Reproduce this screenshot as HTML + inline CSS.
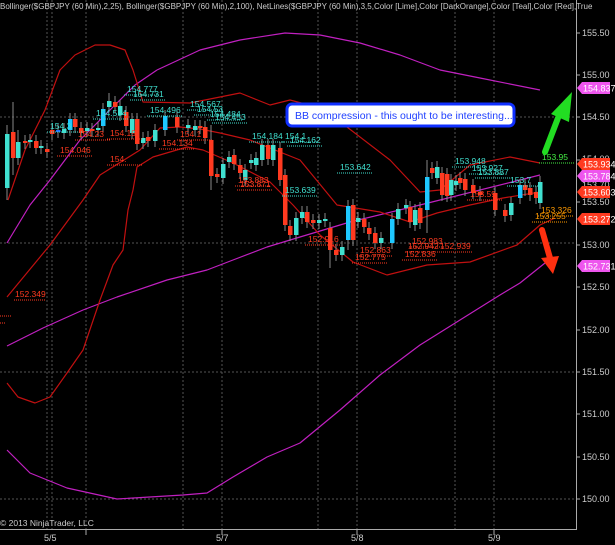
<!DOCTYPE html>
<html><head><meta charset="utf-8"><style>
html,body{margin:0;padding:0;background:#000;width:615px;height:545px;overflow:hidden}
svg{display:block}
text{font-family:"Liberation Sans",sans-serif}
</style></head><body>
<svg id="s" width="615" height="545" viewBox="0 0 615 545" xmlns="http://www.w3.org/2000/svg">
<rect width="615" height="545" fill="#000"/>
<g stroke="#555" stroke-dasharray="2,2" stroke-width="1">
<line x1="47" y1="0" x2="47" y2="529"/>
<line x1="52" y1="0" x2="52" y2="529"/><line x1="86" y1="0" x2="86" y2="529"/>
<line x1="183" y1="0" x2="183" y2="529"/><line x1="222" y1="0" x2="222" y2="529"/>
<line x1="318" y1="0" x2="318" y2="529"/><line x1="357" y1="0" x2="357" y2="529"/>
<line x1="455" y1="0" x2="455" y2="529"/><line x1="494" y1="0" x2="494" y2="529"/>
<line x1="0" y1="117" x2="576" y2="117"/><line x1="0" y1="243" x2="576" y2="243"/>
<line x1="0" y1="372" x2="576" y2="372"/><line x1="0" y1="499" x2="576" y2="499"/>
</g>
<line x1="576.5" y1="0" x2="576.5" y2="529" stroke="#aaa"/>
<line x1="0" y1="529.5" x2="577" y2="529.5" stroke="#aaa"/>
<g fill="none" stroke-width="1.2" stroke-linejoin="round">
<polyline stroke="#c020c0" points="157,70 200,50 240,40 285,33 320,35 360,43 400,55 440,70 480,78 540,90"/>
<polyline stroke="#c020c0" points="7,243 30,205 50,180 80,140 110,110 135,85 157,70"/>
<polyline stroke="#c020c0" points="7,346 43,328 83,310 117,297 167,280 207,270 233,260 267,247 300,237 350,222 420,205 540,175"/>
<polyline stroke="#c020c0" points="7,450 30,473 67,488 117,499 183,495 207,493 233,477 267,457 300,443 340,410 380,375 420,345 460,320 500,295 520,283 545,263"/>
<polyline stroke="#c01010" points="8,200 25,150 45,110 60,70 75,55 95,45 110,45 125,50 133,70 143,102 190,103 240,93 270,105 290,100 320,108 347,127 390,160 420,192 440,190 470,165 510,157 540,163"/>
<polyline stroke="#c01010" points="7,297 50,245 83,200 100,175 140,150 160,128 180,127 200,129 220,133 250,140 300,160 337,205 380,212 410,222 437,213 470,205 503,198 540,192"/>
<polyline stroke="#c01010" points="7,383 18,397 35,403 50,397 67,373 83,350 100,300 113,265 123,250 128,210 133,190 137,167 153,157 187,147 203,150 233,163 270,182 293,205 320,235 353,262 387,275 427,265 470,262 517,245 540,225 555,218"/>
</g>
<g id="c"></g>
<g font-size="8.5" id="lb"></g>
<g fill="#ff3a20" font-size="8.5"><text x="15" y="297">152.349</text></g>
<g stroke="#ff3a20" stroke-dasharray="1,1"><line x1="14" y1="300" x2="46" y2="300"/><line x1="0" y1="316" x2="12" y2="316"/><line x1="0" y1="323" x2="6" y2="323"/></g>
<g font-size="9" fill="#ccc">
<text x="582" y="36">155.50</text><text x="582" y="78">155.00</text><text x="582" y="120">154.50</text>
<text x="582" y="162">154.00</text><text x="582" y="188">153.70</text><text x="582" y="205">153.50</text>
<text x="582" y="248">153.00</text><text x="582" y="290">152.50</text><text x="582" y="333">152.00</text>
<text x="582" y="375">151.50</text><text x="582" y="417">151.00</text><text x="582" y="460">150.50</text>
<text x="582" y="502">150.00</text>
<text x="44" y="541">5/5</text><text x="216" y="541">5/7</text><text x="351" y="541">5/8</text><text x="488" y="541">5/9</text>
</g>
<g stroke="#aaa"><line x1="577" y1="33" x2="580" y2="33"/><line x1="577" y1="75" x2="580" y2="75"/><line x1="577" y1="117" x2="580" y2="117"/><line x1="577" y1="160" x2="580" y2="160"/><line x1="577" y1="202" x2="580" y2="202"/><line x1="577" y1="245" x2="580" y2="245"/><line x1="577" y1="287" x2="580" y2="287"/><line x1="577" y1="330" x2="580" y2="330"/><line x1="577" y1="372" x2="580" y2="372"/><line x1="577" y1="414" x2="580" y2="414"/><line x1="577" y1="457" x2="580" y2="457"/><line x1="577" y1="499" x2="580" y2="499"/><line x1="86" y1="529" x2="86" y2="535"/><line x1="222" y1="529" x2="222" y2="535"/><line x1="357" y1="529" x2="357" y2="535"/><line x1="494" y1="529" x2="494" y2="535"/></g>
<g id="tags" font-size="9" fill="#fff"></g>
<text x="0" y="526" font-size="8.5" fill="#ccc">© 2013 NinjaTrader, LLC</text>
<text x="0" y="9" font-size="8" fill="#ccc">Bollinger($GBPJPY (60 Min),2,25), Bollinger($GBPJPY (60 Min),2,100), NetLines($GBPJPY (60 Min),3,5,Color [Lime],Color [DarkOrange],Color [Teal],Color [Red],True</text>
<rect x="287" y="104" width="227" height="22" rx="5" fill="#fff" stroke="#1030ff" stroke-width="3"/>
<text x="295" y="119" font-size="10.5" fill="#2040ff">BB compression - this ought to be interesting...</text>
<path d="M545,152 L558,118" stroke="#22dd22" stroke-width="6" fill="none" stroke-linecap="round"/>
<polygon points="551,114 572,92 569,122" fill="#22dd22"/>
<path d="M542,230 L550,258" stroke="#ff3010" stroke-width="6" fill="none" stroke-linecap="round"/>
<polygon points="541,258 559,256 553,274" fill="#ff3010"/>
</svg>
<script>
var T="#40e0d0",R="#ff3a20",B="#1e6fff";
var C=[[7,134,188,T,125,200],[13,132,158,R,102,175],[18,142,158,T,130,165],[25,141,143,R],[30,140,142,T],[36,141,148,R],[41,146,148,T],[47,149,152,R],[52,130,134,R],[58,130,132,B],[64,129,133,T],[70,119,130,"#1ec8ff"],[75,119,127,R],[81,128,133,R],[87,128,131,T],[92,129,131,R],[98,128,130,T],[103,109,126,"#1ec8ff"],[109,101,107,T,93,112],[115,102,107,R],[120,106,115,T],[126,112,126,R],[132,119,133,T],[137,119,144,R],[143,138,143,T],[148,137,141,R],[155,130,141,T],[165,116,130,"#1ec8ff"],[177,117,127,R],[188,125,128,T],[195,126,130,T],[200,126,128,R],[205,127,138,R],[211,140,176,R,125,190],[217,174,177,R],[223,164,178,T],[229,157,162,T],[234,155,164,R],[240,165,173,R],[245,170,180,T],[251,160,163,T],[256,158,165,T],[262,145,160,T],[268,145,159,R],[273,145,160,T],[280,148,180,R],[285,175,225,R],[290,226,235,R],[296,218,235,T],[302,212,218,T],[307,212,222,R],[313,220,223,R],[319,220,223,T],[325,219,221,T],[330,228,250,R,222,268],[336,250,255,R],[342,247,255,T],[348,206,240,"#1ec8ff",200,250],[353,205,240,R],[358,218,222,T],[364,219,227,R],[369,228,234,R],[375,233,243,R],[381,238,243,T],[392,219,243,"#1ec8ff"],[398,209,219,T],[406,205,208,T],[410,207,222,R],[415,210,225,T],[420,208,223,R],[427,177,210,"#1ec8ff",160,233],[432,168,173,R],[437,167,178,T],[442,173,195,R],[447,174,196,R],[451,180,195,T],[456,181,185,T],[460,178,183,R],[465,179,190,R],[473,185,193,R],[480,192,195,R],[495,193,210,R],[505,210,216,R],[511,203,215,T],[520,185,198,"#1ec8ff"],[525,185,190,R],[530,188,195,R],[536,192,198,R],[540,182,203,T]];
var h="";
C.forEach(function(c){var x=c[0],t=c[1],b=c[2],col=c[3],wt=c[4]||t-6,wb=c[5]||b+6;
h+='<line x1="'+x+'" y1="'+wt+'" x2="'+x+'" y2="'+wb+'" stroke="#888"/>';
h+='<rect x="'+(x-2)+'" y="'+t+'" width="4.5" height="'+Math.max(1.5,b-t)+'" fill="'+col+'"/>';});
document.getElementById("c").innerHTML=h;
var L=[[127,92,"154.777",T],[133,97,"154.731",T],[96,116,"154.514",T],[150,113,"154.496",T],[190,107,"154.567",T],[197,112,"154.53",T],[210,117,"154.484",T],[215,120,"154.453",T],[50,129,"154.3",T],[252,139,"154.184",T],[285,139,"154.1",T],[290,143,"154.162",T],[285,193,"153.639",T],[340,170,"153.642",T],[455,164,"153.948",T],[472,171,"153.927",T],[478,175,"153.887",T],[510,183,"153.7",T],[110,162,"154.",R],[78,137,"154.23",R],[110,136,"154.19",R],[60,153,"154.046",R],[162,146,"154.134",R],[180,137,"154.1",R],[238,183,"153.883",R],[240,187,"153.871",R],[308,242,"152.916",R],[360,253,"152.863",R],[355,260,"152.775",R],[412,244,"152.983",R],[408,249,"152.942",R],[440,249,"152.939",R],[405,257,"152.836",R],[470,197,"153.59",R],[541,213,"153.326","#ff9a00"],[535,219,"153.255","#ff9a00"],[542,160,"153.95","#44ee44"]];
var g="";
L.forEach(function(l){g+='<text x="'+l[0]+'" y="'+l[1]+'" fill="'+l[3]+'">'+l[2]+'</text><line x1="'+(l[0]-3)+'" y1="'+(l[1]+3)+'" x2="'+(l[0]+32)+'" y2="'+(l[1]+3)+'" stroke="'+l[3]+'" stroke-dasharray="1,1"/>';});
document.getElementById("lb").innerHTML=g;
var G=[[88,"154.837","#ee55ee"],[164,"153.934","#ff3a20"],[176,"153.784","#ee55ee"],[192,"153.603","#ff3a20"],[219,"153.272","#ff3a20"],[266,"152.731","#ee55ee"]];
var k="";
G.forEach(function(a){var y=a[0];k+='<polygon points="577,'+y+' 582,'+(y-6)+' 610,'+(y-6)+' 610,'+(y+6)+' 582,'+(y+6)+'" fill="'+a[2]+'"/><text x="583" y="'+(y+3.5)+'">'+a[1]+'</text>';});
document.getElementById("tags").innerHTML=k;
</script>
</body></html>
